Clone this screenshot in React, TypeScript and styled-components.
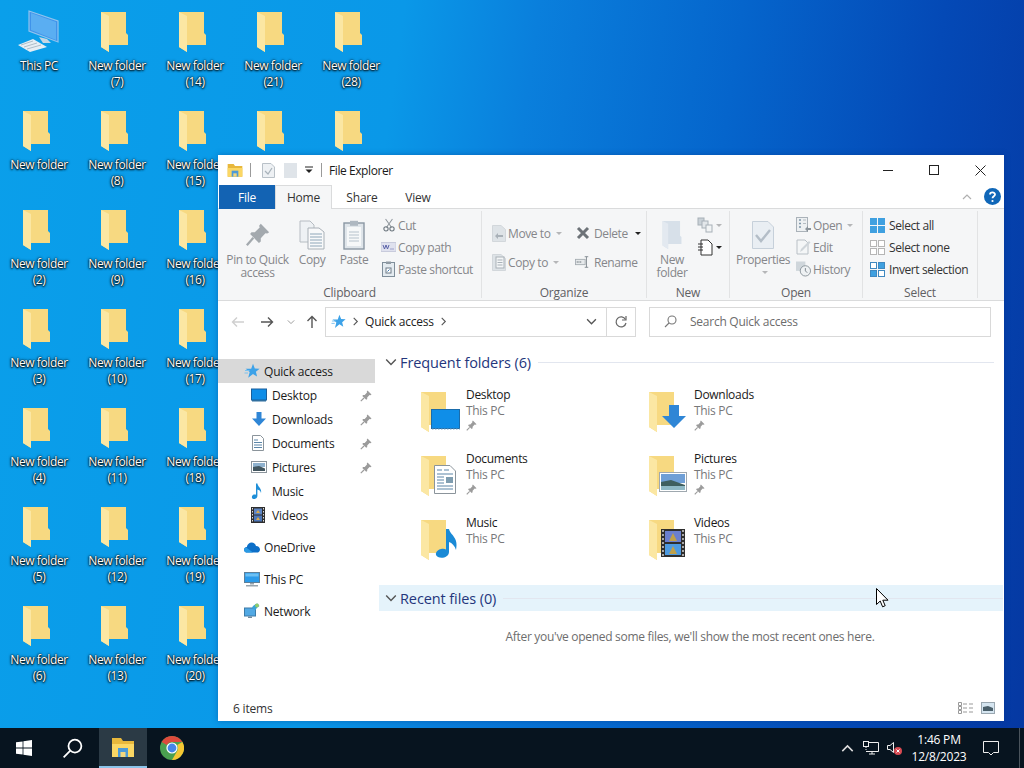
import React from "react";
import styled, { createGlobalStyle } from "styled-components";

const GlobalStyle = createGlobalStyle`
  html, body { margin: 0; padding: 0; width: 1024px; height: 768px; overflow: hidden; }
  body { font-family: "Open Sans", "Noto Sans", sans-serif; font-size: 12px; }
  * { box-sizing: border-box; }
`;

const Screen = styled.div`
  width: 1024px;
  height: 768px;
  position: relative;
  display: flex;
  flex-direction: column;
  overflow: hidden;
`;

const Wallpaper = styled.div`
  flex: 1;
  min-height: 0;
  overflow: hidden;
  background: linear-gradient(98deg, #0a9fea 0%, #0a98e8 36%, #0a7fdc 48%, #0565cc 66%, #0449b6 84%, #0538a2 100%);
  display: grid;
  grid-auto-flow: column;
  grid-template-rows: repeat(7, 99px);
  grid-auto-columns: 78px;
  padding-top: 6px;
`;

const DesktopIcon = styled.div`
  display: flex;
  flex-direction: column;
  align-items: center;
  color: #fff;
  text-align: center;
  line-height: 16px;
  text-shadow: 0 1px 2px #000, 0 0 3px #000, 0 0 1px #000;
  letter-spacing: -0.4px;
`;

const DesktopLabel = styled.div`
  max-width: 66px;
`;

const DesktopGlyph = styled.div<{ $pc?: boolean }>`
  height: 46px;
  margin-bottom: 6px;
  margin-right: ${(p) => (p.$pc ? "0" : "5px")};
  display: flex;
  align-items: flex-end;
`;

const Explorer = styled.div`
  position: absolute;
  left: 218px;
  top: 155px;
  width: 786px;
  height: 566px;
  background: #fff;
  display: flex;
  flex-direction: column;
  box-shadow: 0 0 6px #00308066;
  color: #222;
  letter-spacing: -0.2px;
`;

const TitleBar = styled.div`
  height: 30px;
  display: flex;
  align-items: center;
  padding-left: 9px;
  flex-shrink: 0;
`;

const TitleSep = styled.div<{ $ml: number; $mr: number }>`
  width: 1px;
  height: 14px;
  background: #9a9a9a;
  margin: 0 ${(p) => p.$mr}px 0 ${(p) => p.$ml}px;
`;

const QuickSlot = styled.div<{ $ml?: number }>`
  display: flex;
  margin-left: ${(p) => p.$ml ?? 0}px;
`;

const TitleText = styled.span`
  margin-left: 7px;
  color: #1a1a1a;
  letter-spacing: -0.42px;
`;

const WindowControls = styled.div`
  margin-left: auto;
  display: flex;
  align-items: center;
  padding-right: 1px;
`;

const WindowButton = styled.div`
  width: 46px;
  height: 30px;
  display: flex;
  align-items: center;
  justify-content: center;
`;

const TabBar = styled.div`
  height: 24px;
  display: flex;
  align-items: stretch;
  padding-left: 1px;
  flex-shrink: 0;
  border-bottom: 1px solid #dadbdc;
`;

const FileTab = styled.div`
  width: 56px;
  background: #1363b3;
  color: #fff;
  display: flex;
  align-items: center;
  justify-content: center;
  margin-bottom: -1px;
`;

const Tab = styled.div<{ $active?: boolean; $w: number }>`
  width: ${(p) => p.$w}px;
  display: flex;
  align-items: center;
  justify-content: center;
  color: #333;
  background: ${(p) => (p.$active ? "#f5f6f7" : "transparent")};
  border: ${(p) => (p.$active ? "1px solid #dadbdc" : "1px solid transparent")};
  border-bottom: none;
  margin-bottom: ${(p) => (p.$active ? "-1px" : "0")};
`;

const TabRight = styled.div`
  margin-left: auto;
  display: flex;
  align-items: center;
  gap: 12px;
  padding-right: 3px;
`;

const Ribbon = styled.div`
  height: 92px;
  flex-shrink: 0;
  background: #f5f6f7;
  border-bottom: 1px solid #dadbdc;
  display: flex;
  padding-top: 2px;
  letter-spacing: -0.4px;
`;

const RibbonGroup = styled.div<{ $w: number }>`
  width: ${(p) => p.$w}px;
  height: 87px;
  flex-shrink: 0;
  display: flex;
  flex-direction: column;
  border-right: 1px solid #e2e3e4;
`;

const GroupBody = styled.div<{ $pad?: number }>`
  height: 73px;
  flex-shrink: 0;
  display: flex;
  padding-left: ${(p) => p.$pad ?? 0}px;
`;

const GroupLabel = styled.div`
  height: 14px;
  text-align: center;
  color: #5f6063;
  line-height: 18px;
  letter-spacing: -0.2px;
`;

const BigButton = styled.div<{ $w: number }>`
  width: ${(p) => p.$w}px;
  flex-shrink: 0;
  display: flex;
  flex-direction: column;
  align-items: center;
  text-align: center;
  color: #85868a;
  line-height: 13px;
  padding-top: 7px;
`;

const BigGlyph = styled.div`
  height: 33px;
  display: flex;
  align-items: center;
  justify-content: center;
  margin-bottom: 2px;
`;

const SmallColumn = styled.div<{ $gap?: number; $top?: number; $ml?: number; $w?: number }>`
  display: flex;
  flex-direction: column;
  gap: ${(p) => p.$gap ?? 0}px;
  padding-top: ${(p) => p.$top ?? 3}px;
  margin-left: ${(p) => p.$ml ?? 0}px;
  width: ${(p) => (p.$w ? `${p.$w}px` : "auto")};
`;

const SmallButton = styled.div<{ $dark?: boolean; $gap?: number }>`
  height: 22px;
  display: flex;
  align-items: center;
  gap: ${(p) => p.$gap ?? 2}px;
  white-space: nowrap;
  color: ${(p) => (p.$dark ? "#333" : "#85868a")};
`;

const SmallGlyph = styled.div`
  width: 15px;
  display: flex;
  align-items: center;
  justify-content: center;
  flex-shrink: 0;
`;

const Caret = styled.span<{ $dark?: boolean; $mt?: number }>`
  width: 0;
  height: 0;
  margin-left: 3px;
  margin-top: ${(p) => p.$mt ?? 0}px;
  border-left: 3px solid transparent;
  border-right: 3px solid transparent;
  border-top: 3px solid ${(p) => (p.$dark ? "#222" : "#b5b6b8")};
`;

const AddressRow = styled.div`
  height: 41px;
  flex-shrink: 0;
  display: flex;
  align-items: center;
`;

const NavArrows = styled.div`
  width: 107px;
  height: 29px;
  flex-shrink: 0;
  display: flex;
  align-items: center;
  padding-left: 13px;
`;

const NavSpace = styled.span<{ $w: number }>`
  width: ${(p) => p.$w}px;
`;

const AddressBox = styled.div`
  width: 311px;
  height: 30px;
  display: flex;
  align-items: center;
  border: 1px solid #d9d9d9;
`;

const Crumbs = styled.div`
  flex: 1;
  display: flex;
  align-items: center;
  gap: 5px;
  padding-left: 5px;
  color: #222;
`;

const AddrEnd = styled.div<{ $w: number; $line?: boolean }>`
  width: ${(p) => p.$w}px;
  height: 100%;
  display: flex;
  align-items: center;
  justify-content: center;
  border-left: ${(p) => (p.$line ? "1px solid #d9d9d9" : "none")};
`;

const SearchBox = styled.div`
  width: 342px;
  height: 30px;
  margin-left: 13px;
  border: 1px solid #d9d9d9;
  display: flex;
  align-items: center;
  gap: 13px;
  padding-left: 14px;
  color: #6d6d6d;
  letter-spacing: -0.25px;
`;

const Body = styled.div`
  flex: 1;
  min-height: 0;
  display: flex;
`;

const NavPane = styled.div`
  width: 157px;
  flex-shrink: 0;
  padding-top: 17px;
`;

const NavRow = styled.div<{ $child?: boolean; $active?: boolean; $gap?: boolean }>`
  height: 24px;
  display: flex;
  align-items: center;
  position: relative;
  margin-top: ${(p) => (p.$gap ? "8px" : "0")};
  padding-left: ${(p) => (p.$child ? "33px" : "26px")};
  background: ${(p) => (p.$active ? "#d9d9d9" : "transparent")};
  color: #1a1a1a;
`;

const NavGlyph = styled.div<{ $child?: boolean }>`
  width: ${(p) => (p.$child ? "21px" : "20px")};
  display: flex;
  align-items: center;
`;

const NavPin = styled.div`
  position: absolute;
  right: 3px;
  top: 6px;
`;

const Content = styled.div`
  flex: 1;
  min-width: 0;
  padding-top: 7px;
  display: flex;
  flex-direction: column;
  padding-left: 4px;
  letter-spacing: -0.3px;
`;

const SectionHead = styled.div<{ $hot?: boolean }>`
  height: 26px;
  flex-shrink: 0;
  display: flex;
  align-items: center;
  gap: 3px;
  padding-left: 6px;
  margin-right: ${(p) => (p.$hot ? "1px" : "10px")};
  background: ${(p) => (p.$hot ? "#e5f3fb" : "transparent")};
  color: #24367c;
  font-size: 14.5px;
  letter-spacing: -0.1px;
`;

const SectionLine = styled.div`
  flex: 1;
  height: 1px;
  background: #e2e6ef;
  margin-left: 4px;
`;

const TileGrid = styled.div`
  display: grid;
  grid-template-columns: 228px 228px;
  grid-auto-rows: 64px;
  padding: 11px 0 0 42px;
  height: 210px;
  flex-shrink: 0;
`;

const Tile = styled.div`
  display: flex;
  gap: 18px;
`;

const TileGlyph = styled.div`
  width: 27px;
  padding-top: 6px;
`;

const TileSvg = styled.svg`
  overflow: visible;
`;

const TileText = styled.div`
  line-height: 16px;
  color: #1a1a1a;
  padding-top: 1px;
`;

const TileSub = styled.div`
  color: #77787a;
`;

const EmptyNote = styled.div`
  text-align: center;
  color: #6d6d6d;
  margin-top: 17px;
  padding-right: 3px;
`;

const StatusBar = styled.div`
  height: 26px;
  flex-shrink: 0;
  display: flex;
  align-items: center;
  justify-content: space-between;
  padding: 0 9px 0 15px;
  color: #333;
`;

const ViewIcons = styled.div`
  display: flex;
  align-items: center;
  gap: 7px;
`;

const Taskbar = styled.div`
  height: 40px;
  flex-shrink: 0;
  background: #07141f;
  display: flex;
  align-items: stretch;
  color: #fff;
`;

const TaskButton = styled.div<{ $active?: boolean; $ml?: number }>`
  width: 48px;
  margin-left: ${(p) => p.$ml ?? 0}px;
  display: flex;
  align-items: center;
  justify-content: center;
  background: ${(p) => (p.$active ? "#2b3a45" : "transparent")};
  border-bottom: ${(p) => (p.$active ? "2px solid #8cc4ea" : "none")};
`;

const Tray = styled.div`
  margin-left: auto;
  display: flex;
  align-items: center;
`;

const TrayIcon = styled.div`
  width: 24px;
  display: flex;
  align-items: center;
  justify-content: center;
`;

const Clock = styled.div`
  width: 56px;
  margin-left: 4px;
  text-align: center;
  line-height: 17px;
  letter-spacing: -0.2px;
  white-space: nowrap;
  display: flex;
  flex-direction: column;
  align-items: center;
`;

const ActionCenter = styled.div`
  width: 52px;
  padding-right: 4px;
  display: flex;
  align-items: center;
  justify-content: center;
`;

const ShowDesktop = styled.div`
  width: 5px;
  align-self: stretch;
  border-left: 1px solid #4a545c;
`;

const Cursor = styled.svg`
  position: absolute;
  left: 876px;
  top: 588px;
`;

/* ---- drawings ---- */

const FolderShape = () => (
  <>
    <path d="M0 0H25V21L27 23V33H8V40L0 35Z" fill="#f7d981" />
    <path d="M0 0L8 4V40L0 35Z" fill="#fbe7a3" />
  </>
);

const Folder = () => (
  <svg width="27" height="40" viewBox="0 0 27 40">
    <FolderShape />
  </svg>
);

const ThisPcBig = () => (
  <svg width="44" height="42" viewBox="0 0 44 42">
    <path d="M12 1L41 11V32L12 21Z" fill="#3f93ea" stroke="#8fc4ee" strokeWidth="1.2" />
    <path d="M14 3L39 12V30L14 20Z" fill="#5aaef2" />
    <path d="M22 27L30 29L34 33L26 33Z" fill="#c4d6e4" />
    <path d="M1 35L16 29L30 37L13 42Z" fill="#e6eef4" />
    <path d="M4 35L16 31M7 37L20 33M10 39L24 35" stroke="#9fb0bd" strokeWidth="0.8" />
  </svg>
);

const Pin = ({ size = 12, color = "#9b9b9b" }: { size?: number; color?: string }) => (
  <svg width={size} height={size} viewBox="0 0 12 12">
    <path d="M7.5 0.5L11.5 4.5L10.5 5.2L9.5 5L7.2 7.4L7.2 9L6.2 9.8L2.3 5.9L3.1 4.9H4.7L7 2.5L6.8 1.5Z" fill={color} />
    <path d="M4 8L0.8 11.2" stroke={color} strokeWidth="1.2" />
  </svg>
);

const Star = ({ size = 16 }: { size?: number }) => (
  <svg width={size} height={size} viewBox="0 0 16 16">
    <path d="M9 0.8L10.8 5.4L15.6 5.7L11.9 8.8L13.1 13.6L9 11L4.2 14.8L5.7 9L1.6 5.8H7.2Z" fill="#3da2e8" />
    <path d="M1 7.5H5.5M0.5 10H4" stroke="#7cc2ef" strokeWidth="1" />
  </svg>
);

const DesktopSmall = () => (
  <svg width="16" height="14" viewBox="0 0 16 14">
    <rect x="0.5" y="1" width="15" height="11" fill="#0f8ee8" stroke="#1a5f9c" />
    <rect x="1" y="12" width="14" height="1.5" fill="#2f6f9f" />
  </svg>
);

const DownSmall = () => (
  <svg width="16" height="16" viewBox="0 0 16 16">
    <path d="M5.5 1H10.5V7.5H15L8 15L1 7.5H5.5Z" fill="#2f86d6" />
  </svg>
);

const DocSmall = () => (
  <svg width="14" height="16" viewBox="0 0 14 16">
    <path d="M1.5 0.5H9.5L12.5 3.5V15.5H1.5Z" fill="#fff" stroke="#8b949b" />
    <path d="M3 5H7M3 7.5H11M3 10H11M3 12.5H11" stroke="#5c86a8" strokeWidth="1" />
  </svg>
);

const PicSmall = () => (
  <svg width="16" height="14" viewBox="0 0 16 14">
    <rect x="0.5" y="1.5" width="15" height="11" fill="#fff" stroke="#8b949b" />
    <rect x="2" y="3" width="12" height="4" fill="#8fb2cf" />
    <path d="M2 7L8 6L14 8.5V11H2Z" fill="#42565f" />
  </svg>
);

const NoteSmall = () => (
  <svg width="12" height="17" viewBox="0 0 12 17">
    <path d="M5 0.5H6.4C6.8 4 11 5 10 10C9.6 7.8 8 7 6.4 6.6V13C6.4 15.4 3.6 16.6 1.8 15.8C0 14.8 1 12 3 11.6C3.8 11.4 4.5 11.5 5 11.8Z" fill="#1f8fd8" />
  </svg>
);

const FilmSmall = () => (
  <svg width="14" height="16" viewBox="0 0 14 16">
    <rect width="14" height="16" fill="#2e2e2e" />
    <rect x="3" y="1.5" width="8" height="6" fill="#5f86c4" />
    <rect x="3" y="8.5" width="8" height="6" fill="#4d77b8" />
    <path d="M5 6L7 3L9 6M5 13L7 10L9 13" fill="#d8a94a" />
    <path d="M1.5 1V15M12.5 1V15" stroke="#ddd" strokeWidth="1" strokeDasharray="1.5 1.5" />
  </svg>
);

const Cloud = () => (
  <svg width="16" height="11" viewBox="0 0 16 11">
    <path d="M3.4 10.6C1.4 10.6 0 9.4 0 7.7C0 6.2 1.2 5 2.8 5C3.4 2.3 5.4 0.6 7.6 0.6C9.8 0.6 11.4 2 12 3.9C14.4 3.9 16 5.6 16 7.4C16 9.3 14.6 10.6 12.8 10.6Z" fill="#0d6fc8" />
    <path d="M3.4 10.6C1.4 10.6 0 9.4 0 7.7C0 6.6 1 5.6 2.6 5.8L9 10.6Z" fill="#2a9ae4" />
  </svg>
);

const PcSmall = () => (
  <svg width="16" height="15" viewBox="0 0 16 15">
    <rect x="0.5" y="0.5" width="15" height="10" fill="#2b9bea" stroke="#5c7f99" />
    <rect x="1.5" y="1.5" width="13" height="3" fill="#6cc0f3" />
    <path d="M6 11H10V12.5H6ZM2 13H14V14.5H2Z" fill="#98a4ad" />
  </svg>
);

const NetSmall = () => (
  <svg width="16" height="16" viewBox="0 0 16 16">
    <rect x="0.5" y="5" width="11" height="8" fill="#52a9e4" stroke="#3c7ba8" />
    <path d="M4 13.5H8V15H4Z" fill="#6f8a9e" />
    <path d="M8 4.5C9 2.5 11 1 13.5 0.5L15.5 3C14 3.8 12.5 5 11.5 7L9 6Z" fill="#3aa4d6" />
    <circle cx="13" cy="2.5" r="2" fill="#92cc6a" />
  </svg>
);

const overlayFor: Record<string, React.ReactNode> = {
  Desktop: (
    <>
      <rect x="10.5" y="17.5" width="28" height="19" fill="#0f8ee8" stroke="#1a6cab" />
      <path d="M11 37H39" stroke="#6a9cc2" strokeDasharray="1.5 1.5" />
    </>
  ),
  Downloads: <path d="M20 13H30V24H37L25 36L13 24H20Z" fill="#2f86d6" />,
  Documents: (
    <>
      <path d="M13.5 9.5H29L34.5 15V37.5H13.5Z" fill="#fff" stroke="#8b949b" />
      <path d="M16 14H21M23 14H28M16 18H32M16 27H23M16 30H32M16 33H32" stroke="#5c86a8" strokeWidth="1.2" />
      <rect x="25" y="21" width="7" height="6" fill="#7f9db0" />
      <path d="M16 21H23M16 24H23" stroke="#5c86a8" />
    </>
  ),
  Pictures: (
    <>
      <rect x="10.5" y="16.5" width="27" height="19" fill="#fff" stroke="#9fa8af" />
      <rect x="12" y="18" width="24" height="9" fill="#6f9fd6" />
      <path d="M12 26L22 24L36 29V34H12Z" fill="#3f5f5f" />
      <path d="M12 30H36V34H12Z" fill="#8fb9c6" />
    </>
  ),
  Music: (
    <path d="M25 9H28C29 15 38 17 35 30C34 26 31 23 28 22V32C28 37 21 39 17 37C13 35 15 30 20 29C22 28.6 24 28.8 25 29.5Z" fill="#1a8ad6" />
  ),
  Videos: (
    <>
      <rect x="12" y="9" width="24" height="28" fill="#2e2e2e" />
      <rect x="16" y="11" width="16" height="11" fill="#6a7fd0" />
      <rect x="16" y="24" width="16" height="11" fill="#4d9ae0" />
      <path d="M20 21L24 13L28 21M20 34L24 26L28 34" fill="#c0a14a" />
      <path d="M14 10V37M34 10V37" stroke="#ddd" strokeWidth="1.4" strokeDasharray="2 2" />
    </>
  ),
};

const FolderTile = ({ name }: { name: string }) => (
  <TileSvg width="41" height="41" viewBox="0 0 41 41">
    <FolderShape />
    {overlayFor[name]}
  </TileSvg>
);

const PinBig = () => (
  <svg width="26" height="26" viewBox="0 0 28 28">
    <path d="M17 2L26 11L24 12.5L22 12L17 17.5L17 21L15 22.5L5.5 13L7 11H10.5L15.8 6L15.2 4Z" fill="#a3a9ae" />
    <path d="M9 17L2 25" stroke="#a3a9ae" strokeWidth="2.4" />
  </svg>
);

const CopyBig = () => (
  <svg width="26" height="30" viewBox="0 0 26 30">
    <path d="M1 1H11L15 5V22H1Z" fill="#eef1f4" stroke="#b6bcc2" />
    <path d="M9 8H20L25 12V29H9Z" fill="#f8f9fa" stroke="#a9b0b7" />
    <path d="M11 14H23M11 17H23M11 20H23M11 23H23M11 26H23" stroke="#8ea6b8" />
  </svg>
);

const PasteBig = () => (
  <svg width="22" height="30" viewBox="0 0 22 30">
    <rect x="1" y="3" width="20" height="26" fill="#dfe5ea" stroke="#8a97a3" strokeWidth="1.4" />
    <rect x="4" y="7" width="14" height="19" fill="#f6f8f9" />
    <path d="M6 12H16M6 15H16M6 18H16M6 21H16" stroke="#b6c2cc" />
    <rect x="7" y="0.8" width="8" height="5" fill="#aeb8c1" />
  </svg>
);

const Scissors = () => (
  <svg width="12" height="16" viewBox="0 0 14 16">
    <path d="M3 1L10 11M11 1L4 11" stroke="#8f969c" strokeWidth="1.2" />
    <circle cx="3.5" cy="12.5" r="2.5" fill="none" stroke="#707a82" strokeWidth="1.3" />
    <circle cx="10.5" cy="12.5" r="2.5" fill="none" stroke="#707a82" strokeWidth="1.3" />
  </svg>
);

const PathIcon = () => (
  <svg width="15" height="12" viewBox="0 0 15 12">
    <rect x="0" y="1.5" width="15" height="9" fill="#dfe1ee" stroke="#c8cbdc" />
    <path d="M2 4L3.5 8L5 4L6.5 8L8 4" stroke="#5a62a8" fill="none" />
    <path d="M9.5 8H10.5M11.5 8H12.5" stroke="#5a62a8" />
  </svg>
);

const ShortcutIcon = () => (
  <svg width="13" height="16" viewBox="0 0 13 16">
    <rect x="0.5" y="1.5" width="12" height="14" fill="#e4ebf0" stroke="#7f8e9a" />
    <rect x="4" y="0.5" width="5" height="2.5" fill="#8f9aa3" />
    <rect x="4" y="7" width="5" height="5" fill="#fff" stroke="#6c7a86" />
    <path d="M5.5 10.5L7.5 8.5" stroke="#3a78b0" />
  </svg>
);

const MoveIcon = ({ arrow }: { arrow?: boolean }) => (
  <svg width="14" height="17" viewBox="0 0 14 17">
    <path d="M0.5 0.5H9L13.5 4.5V16.5H0.5Z" fill="#dee3e7" stroke="#d2d7db" />
    {arrow ? (
      <path d="M3 11L6 8V10H11V12H6V14Z" fill="#a9b1b8" />
    ) : (
      <>
        <rect x="4" y="3" width="8" height="11" fill="#f4f6f7" stroke="#a9b1b8" />
        <path d="M5.5 6H10.5M5.5 8.5H10.5M5.5 11H10.5" stroke="#a9b1b8" />
      </>
    )}
  </svg>
);

const DeleteX = () => (
  <svg width="14" height="14" viewBox="0 0 14 14">
    <path d="M2 2L12 12M12 2L2 12" stroke="#6d7378" strokeWidth="3" />
  </svg>
);

const RenameIcon = () => (
  <svg width="15" height="14" viewBox="0 0 17 14">
    <rect x="0.5" y="4" width="11" height="6" fill="#e6e9eb" stroke="#a5acb2" />
    <path d="M2 7H8" stroke="#8d959b" strokeWidth="2" strokeDasharray="1 1" />
    <path d="M13 1V13M11 1H15M11 13H15" stroke="#7b848b" />
  </svg>
);

const NewFolderBig = () => (
  <svg width="20" height="28" viewBox="0 0 27 40">
    <path d="M0 0H25V21L27 23V33H8V40L0 35Z" fill="#d7e0e9" />
    <path d="M0 0L8 4V40L0 35Z" fill="#e3e9f0" />
  </svg>
);

const NewItemIcon = () => (
  <svg width="16" height="16" viewBox="0 0 16 16">
    <rect x="1" y="1" width="6" height="7" fill="#c9d1d7" stroke="#a7b0b7" />
    <rect x="5" y="4" width="6" height="7" fill="#e3e7ea" stroke="#a7b0b7" />
    <rect x="9" y="8" width="6" height="7" fill="#f2f4f5" stroke="#a7b0b7" />
  </svg>
);

const NewDocIcon = () => (
  <svg width="16" height="17" viewBox="0 0 16 17">
    <path d="M4 1H11L15 5V16H4Z" fill="#fff" stroke="#333" />
    <path d="M1 5H6M1 8H6M1 11H6" stroke="#333" />
  </svg>
);

const PropsBig = () => (
  <svg width="22" height="28" viewBox="0 0 22 28">
    <path d="M0.5 0.5H16L21.5 6V27.5H0.5Z" fill="#e9eef3" stroke="#c6d0da" />
    <path d="M4 14L9 20L18 9" fill="none" stroke="#b3bdc7" strokeWidth="2.4" />
  </svg>
);

const OpenIcon = () => (
  <svg width="15" height="16" viewBox="0 0 15 16">
    <rect x="0.5" y="0.5" width="11" height="14" fill="#edf0f2" stroke="#aab2b9" />
    <path d="M3 3H5M3 6.5H5M3 10H5" stroke="#7f97ab" strokeWidth="1.5" />
    <path d="M7 3H10M7 6.5H10" stroke="#b5bcc2" />
    <path d="M9 12L12 9V11H15V13H12V15Z" fill="#8b949b" />
  </svg>
);

const EditIcon = () => (
  <svg width="15" height="16" viewBox="0 0 15 16">
    <path d="M1 1H9L12 4V15H1Z" fill="#f4f6f7" stroke="#b9c0c6" />
    <path d="M4 13L5 10L13 2L14.5 3.5L6.5 11.5Z" fill="#cfd5da" />
  </svg>
);

const HistoryIcon = () => (
  <svg width="15" height="16" viewBox="0 0 16 16">
    <rect x="0" y="0" width="10" height="10" fill="#cfd6db" />
    <circle cx="10" cy="10" r="5.5" fill="#eef1f3" stroke="#8b949b" />
    <path d="M10 7V10L12 12" stroke="#7b848b" fill="none" />
  </svg>
);

const Squares = ({ fills, stroke }: { fills: string[]; stroke: string }) => (
  <svg width="15" height="15" viewBox="0 0 15 15">
    {[
      [0.5, 0.5],
      [8.5, 0.5],
      [0.5, 8.5],
      [8.5, 8.5],
    ].map(([x, y], i) => (
      <rect key={i} x={x} y={y} width="6" height="6" fill={fills[i]} stroke={stroke} />
    ))}
  </svg>
);

const ExplorerFolderIcon = ({ size = 16 }: { size?: number }) => (
  <svg width={size} height={size} viewBox="0 0 24 24">
    <path d="M1 3H10L12 6H23V22H1Z" fill="#e8b83c" />
    <rect x="1" y="9" width="22" height="13" fill="#fbd764" />
    <rect x="7" y="13" width="10" height="9" fill="#4c9ad8" />
    <rect x="9.5" y="17" width="5" height="5" fill="#f3d77e" />
  </svg>
);

const Arrow = ({ color, dir }: { color: string; dir: "left" | "right" | "up" }) => (
  <svg width="14" height="14" viewBox="0 0 14 14">
    <g transform={dir === "left" ? "rotate(180 7 7)" : dir === "up" ? "rotate(-90 7 7)" : undefined}>
      <path d="M1 7H12.5M8 2.5L12.5 7L8 11.5" fill="none" stroke={color} strokeWidth="1.4" />
    </g>
  </svg>
);

const Chevron = ({ dir, size = 10, color = "#666" }: { dir: "down" | "right" | "up"; size?: number; color?: string }) => (
  <svg width={size} height={size} viewBox="0 0 10 10">
    <path
      d={dir === "down" ? "M1 3L5 7L9 3" : dir === "up" ? "M1 7L5 3L9 7" : "M3 1L7 5L3 9"}
      fill="none"
      stroke={color}
      strokeWidth="1.2"
    />
  </svg>
);

const HelpIcon = () => (
  <svg width="17" height="17" viewBox="0 0 17 17">
    <circle cx="8.5" cy="8.5" r="8.5" fill="#1067b8" />
    <path d="M6 6.5C6 3.8 11 3.8 11 6.4C11 8.2 8.5 8.2 8.5 10.2" fill="none" stroke="#fff" strokeWidth="1.8" />
    <circle cx="8.5" cy="13" r="1.1" fill="#fff" />
  </svg>
);

const Refresh = () => (
  <svg width="14" height="14" viewBox="0 0 14 14">
    <path d="M11.5 4.5A5 5 0 1 0 12 8" fill="none" stroke="#666" strokeWidth="1.2" />
    <path d="M12 1V5H8" fill="none" stroke="#666" strokeWidth="1.2" />
  </svg>
);

const SearchGlyph = ({ size = 13, color = "#777", w = 1.1 }: { size?: number; color?: string; w?: number }) => (
  <svg width={size} height={size} viewBox="0 0 13 13">
    <circle cx="8" cy="5" r="4" fill="none" stroke={color} strokeWidth={w} />
    <path d="M5 8L1 12" stroke={color} strokeWidth={w} />
  </svg>
);

const Chrome = () => (
  <svg width="24" height="24" viewBox="0 0 24 24">
    <circle cx="12" cy="12" r="12" fill="#4aa04f" />
    <path d="M12 0A12 12 0 0 1 22.4 6H12A6 6 0 0 0 6.8 9L1.6 6A12 12 0 0 1 12 0Z" fill="#dd4a3c" />
    <path d="M22.4 6A12 12 0 0 1 12 24L17.2 15A6 6 0 0 0 17.2 9Z" fill="#f6c733" />
    <circle cx="12" cy="12" r="5.6" fill="#fff" />
    <circle cx="12" cy="12" r="4.4" fill="#4586e8" />
  </svg>
);

const frequent = [
  { name: "Desktop", pin: true },
  { name: "Downloads", pin: true },
  { name: "Documents", pin: true },
  { name: "Pictures", pin: true },
  { name: "Music", pin: false },
  { name: "Videos", pin: false },
];

const navItems = [
  { label: "Desktop", icon: <DesktopSmall />, pin: true },
  { label: "Downloads", icon: <DownSmall />, pin: true },
  { label: "Documents", icon: <DocSmall />, pin: true },
  { label: "Pictures", icon: <PicSmall />, pin: true },
  { label: "Music", icon: <NoteSmall />, pin: false },
  { label: "Videos", icon: <FilmSmall />, pin: false },
];

const desktopNames: string[] = ["This PC", "New folder"];
for (let i = 2; i <= 34; i++) desktopNames.push(`New folder (${i})`);

const App: React.FC = () => {
  return (
    <Screen>
      <GlobalStyle />
      <Wallpaper>
        {desktopNames.map((name, i) => (
          <DesktopIcon key={name}>
            <DesktopGlyph $pc={i === 0}>{i === 0 ? <ThisPcBig /> : <Folder />}</DesktopGlyph>
            <DesktopLabel>{name}</DesktopLabel>
          </DesktopIcon>
        ))}
      </Wallpaper>

      <Explorer>
        <TitleBar>
          <ExplorerFolderIcon />
          <TitleSep $ml={7} $mr={11} />
          <svg width="13" height="15" viewBox="0 0 13 15">
            <path d="M0.5 0.5H9L12.5 4V14.5H0.5Z" fill="#eef1f4" stroke="#b9c1c8" />
            <path d="M3 8L6 11L10 5" fill="none" stroke="#a8b2ba" strokeWidth="1.2" />
          </svg>
          <QuickSlot $ml={9}>
            <svg width="13" height="15" viewBox="0 0 13 15">
              <rect width="13" height="15" fill="#dfe4e9" />
            </svg>
          </QuickSlot>
          <QuickSlot $ml={8}>
            <svg width="8" height="8" viewBox="0 0 8 8">
              <path d="M0 1H8" stroke="#222" />
              <path d="M0.5 3.5H7.5L4 7Z" fill="#222" />
            </svg>
          </QuickSlot>
          <TitleSep $ml={8} $mr={0} />
          <TitleText>File Explorer</TitleText>
          <WindowControls>
            <WindowButton>
              <svg width="10" height="10" viewBox="0 0 10 10">
                <path d="M0 5.5H10" stroke="#222" />
              </svg>
            </WindowButton>
            <WindowButton>
              <svg width="10" height="10" viewBox="0 0 10 10">
                <rect x="0.5" y="0.5" width="9" height="9" fill="none" stroke="#222" />
              </svg>
            </WindowButton>
            <WindowButton>
              <svg width="11" height="11" viewBox="0 0 11 11">
                <path d="M0.5 0.5L10.5 10.5M10.5 0.5L0.5 10.5" stroke="#222" />
              </svg>
            </WindowButton>
          </WindowControls>
        </TitleBar>

        <TabBar>
          <FileTab>File</FileTab>
          <Tab $active $w={57}>Home</Tab>
          <Tab $w={60}>Share</Tab>
          <Tab $w={52}>View</Tab>
          <TabRight>
            <Chevron dir="up" size={10} color="#b0b0b0" />
            <HelpIcon />
          </TabRight>
        </TabBar>

        <Ribbon>
          <RibbonGroup $w={264}>
            <GroupBody $pad={5}>
              <BigButton $w={69}>
                <BigGlyph><PinBig /></BigGlyph>
                Pin to Quick access
              </BigButton>
              <BigButton $w={40}>
                <BigGlyph><CopyBig /></BigGlyph>
                Copy
              </BigButton>
              <BigButton $w={44}>
                <BigGlyph><PasteBig /></BigGlyph>
                Paste
              </BigButton>
              <SmallColumn $ml={5}>
                <SmallButton><SmallGlyph><Scissors /></SmallGlyph>Cut</SmallButton>
                <SmallButton><SmallGlyph><PathIcon /></SmallGlyph>Copy path</SmallButton>
                <SmallButton><SmallGlyph><ShortcutIcon /></SmallGlyph>Paste shortcut</SmallButton>
              </SmallColumn>
            </GroupBody>
            <GroupLabel>Clipboard</GroupLabel>
          </RibbonGroup>

          <RibbonGroup $w={165}>
            <GroupBody $pad={9}>
              <SmallColumn $top={11} $gap={7} $w={84}>
                <SmallButton><SmallGlyph><MoveIcon arrow /></SmallGlyph>Move to<Caret /></SmallButton>
                <SmallButton><SmallGlyph><MoveIcon /></SmallGlyph>Copy to<Caret /></SmallButton>
              </SmallColumn>
              <SmallColumn $top={11} $gap={7}>
                <SmallButton $gap={4}><SmallGlyph><DeleteX /></SmallGlyph>Delete<Caret $dark /></SmallButton>
                <SmallButton $gap={4}><SmallGlyph><RenameIcon /></SmallGlyph>Rename</SmallButton>
              </SmallColumn>
            </GroupBody>
            <GroupLabel>Organize</GroupLabel>
          </RibbonGroup>

          <RibbonGroup $w={83}>
            <GroupBody>
              <BigButton $w={50}>
                <BigGlyph><NewFolderBig /></BigGlyph>
                New folder
              </BigButton>
              <SmallColumn $top={3}>
                <SmallButton $gap={0}><NewItemIcon /><Caret /></SmallButton>
                <SmallButton $gap={0}><NewDocIcon /><Caret $dark /></SmallButton>
              </SmallColumn>
            </GroupBody>
            <GroupLabel>New</GroupLabel>
          </RibbonGroup>

          <RibbonGroup $w={133}>
            <GroupBody $pad={4}>
              <BigButton $w={58}>
                <BigGlyph><PropsBig /></BigGlyph>
                Properties
                <Caret $mt={5} />
              </BigButton>
              <SmallColumn $ml={4}>
                <SmallButton><SmallGlyph><OpenIcon /></SmallGlyph>Open<Caret /></SmallButton>
                <SmallButton><SmallGlyph><EditIcon /></SmallGlyph>Edit</SmallButton>
                <SmallButton><SmallGlyph><HistoryIcon /></SmallGlyph>History</SmallButton>
              </SmallColumn>
            </GroupBody>
            <GroupLabel>Open</GroupLabel>
          </RibbonGroup>

          <RibbonGroup $w={115}>
            <GroupBody $pad={7}>
              <SmallColumn>
                <SmallButton $dark $gap={4}><SmallGlyph><Squares fills={["#3fa0e0", "#3fa0e0", "#3fa0e0", "#3fa0e0"]} stroke="#3fa0e0" /></SmallGlyph>Select all</SmallButton>
                <SmallButton $dark $gap={4}><SmallGlyph><Squares fills={["#fff", "#fff", "#fff", "#fff"]} stroke="#b5b5b5" /></SmallGlyph>Select none</SmallButton>
                <SmallButton $dark $gap={4}><SmallGlyph><Squares fills={["#fff", "#3fa0e0", "#3fa0e0", "#fff"]} stroke="#3f88c0" /></SmallGlyph>Invert selection</SmallButton>
              </SmallColumn>
            </GroupBody>
            <GroupLabel>Select</GroupLabel>
          </RibbonGroup>
        </Ribbon>

        <AddressRow>
          <NavArrows>
            <Arrow dir="left" color="#cfcfcf" />
            <NavSpace $w={15} />
            <Arrow dir="right" color="#555" />
            <NavSpace $w={13} />
            <Chevron dir="down" size={8} color="#999" />
            <NavSpace $w={10} />
            <Arrow dir="up" color="#555" />
          </NavArrows>
          <AddressBox>
            <Crumbs>
              <Star size={15} />
              <Chevron dir="right" size={9} color="#555" />
              <span>Quick access</span>
              <Chevron dir="right" size={9} color="#555" />
            </Crumbs>
            <AddrEnd $w={29}><Chevron dir="down" size={11} color="#555" /></AddrEnd>
            <AddrEnd $w={29} $line><Refresh /></AddrEnd>
          </AddressBox>
          <SearchBox>
            <SearchGlyph />
            Search Quick access
          </SearchBox>
        </AddressRow>

        <Body>
          <NavPane>
            <NavRow $active>
              <NavGlyph><Star /></NavGlyph>
              Quick access
            </NavRow>
            {navItems.map((item) => (
              <NavRow key={item.label} $child>
                <NavGlyph $child>{item.icon}</NavGlyph>
                {item.label}
                {item.pin && (
                  <NavPin><Pin /></NavPin>
                )}
              </NavRow>
            ))}
            <NavRow $gap>
              <NavGlyph><Cloud /></NavGlyph>
              OneDrive
            </NavRow>
            <NavRow $gap>
              <NavGlyph><PcSmall /></NavGlyph>
              This PC
            </NavRow>
            <NavRow $gap>
              <NavGlyph><NetSmall /></NavGlyph>
              Network
            </NavRow>
          </NavPane>

          <Content>
            <SectionHead>
              <Chevron dir="down" size={12} color="#555" />
              Frequent folders (6)
              <SectionLine />
            </SectionHead>
            <TileGrid>
              {frequent.map((f) => (
                <Tile key={f.name}>
                  <TileGlyph><FolderTile name={f.name} /></TileGlyph>
                  <TileText>
                    {f.name}
                    <TileSub>This PC</TileSub>
                    {f.pin && <Pin size={11} />}
                  </TileText>
                </Tile>
              ))}
            </TileGrid>
            <SectionHead $hot>
              <Chevron dir="down" size={12} color="#555" />
              Recent files (0)
              <SectionLine />
            </SectionHead>
            <EmptyNote>After you've opened some files, we'll show the most recent ones here.</EmptyNote>
          </Content>
        </Body>

        <StatusBar>
          6 items
          <ViewIcons>
            <svg width="16" height="12" viewBox="0 0 16 12">
              <path d="M0.5 0.5H3.5V3.5H0.5ZM0.5 4.5H3.5V7.5H0.5ZM0.5 8.5H3.5V11.5H0.5Z" fill="none" stroke="#999" />
              <path d="M5 2H9M11 2H15M5 6H9M11 6H15M5 10H9M11 10H15" stroke="#999" />
            </svg>
            <svg width="14" height="12" viewBox="0 0 14 12">
              <rect x="0.5" y="0.5" width="13" height="11" fill="#d5e5f0" stroke="#9aa7b0" />
              <path d="M2 5L7 4L12 6V9H2Z" fill="#4a5f6a" />
            </svg>
          </ViewIcons>
        </StatusBar>
      </Explorer>

      <Cursor width="13" height="20" viewBox="0 0 13 20">
        <path d="M0.5 0.5V16.5L4.2 13L6.6 18.8L9.2 17.7L6.8 12.2H12Z" fill="#fff" stroke="#000" />
      </Cursor>

      <Taskbar>
        <TaskButton>
          <svg width="16" height="16" viewBox="0 0 16 16">
            <path d="M0 2.3L6.6 1.4V7.6H0ZM7.4 1.3L16 0V7.6H7.4ZM0 8.4H6.6V14.6L0 13.7ZM7.4 8.4H16V16L7.4 14.7Z" fill="#fff" />
          </svg>
        </TaskButton>
        <TaskButton>
          <SearchGlyph size={21} color="#fff" w={1.1} />
        </TaskButton>
        <TaskButton $active $ml={3}>
          <ExplorerFolderIcon size={24} />
        </TaskButton>
        <TaskButton $ml={1}>
          <Chrome />
        </TaskButton>
        <Tray>
          <TrayIcon><Chevron dir="up" size={13} color="#ddd" /></TrayIcon>
          <TrayIcon>
            <svg width="16" height="14" viewBox="0 0 16 14">
              <path d="M3 1.5H15.5V10.5H3M9 10.5V13M6 13H12" fill="none" stroke="#eee" />
              <rect x="0.5" y="0.5" width="5" height="5" fill="#07141f" stroke="#eee" />
              <path d="M3 6V10" stroke="#eee" strokeDasharray="1 1" />
            </svg>
          </TrayIcon>
          <TrayIcon>
            <svg width="16" height="15" viewBox="0 0 16 15">
              <path d="M0.5 4.5H3L6.5 1.5V11.5L3 8.5H0.5Z" fill="none" stroke="#eee" />
              <circle cx="11" cy="10" r="4" fill="#d84a52" />
              <path d="M9.5 8.5L12.5 11.5M12.5 8.5L9.5 11.5" stroke="#fff" />
            </svg>
          </TrayIcon>
          <Clock>
            <span>1:46 PM</span>
            <span>12/8/2023</span>
          </Clock>
          <ActionCenter>
            <svg width="16" height="15" viewBox="0 0 16 15">
              <path d="M0.5 0.5H15.5V11.5H10.5L8 14L5.5 11.5H0.5Z" fill="none" stroke="#eee" />
            </svg>
          </ActionCenter>
          <ShowDesktop />
        </Tray>
      </Taskbar>
    </Screen>
  );
};

export default App;
